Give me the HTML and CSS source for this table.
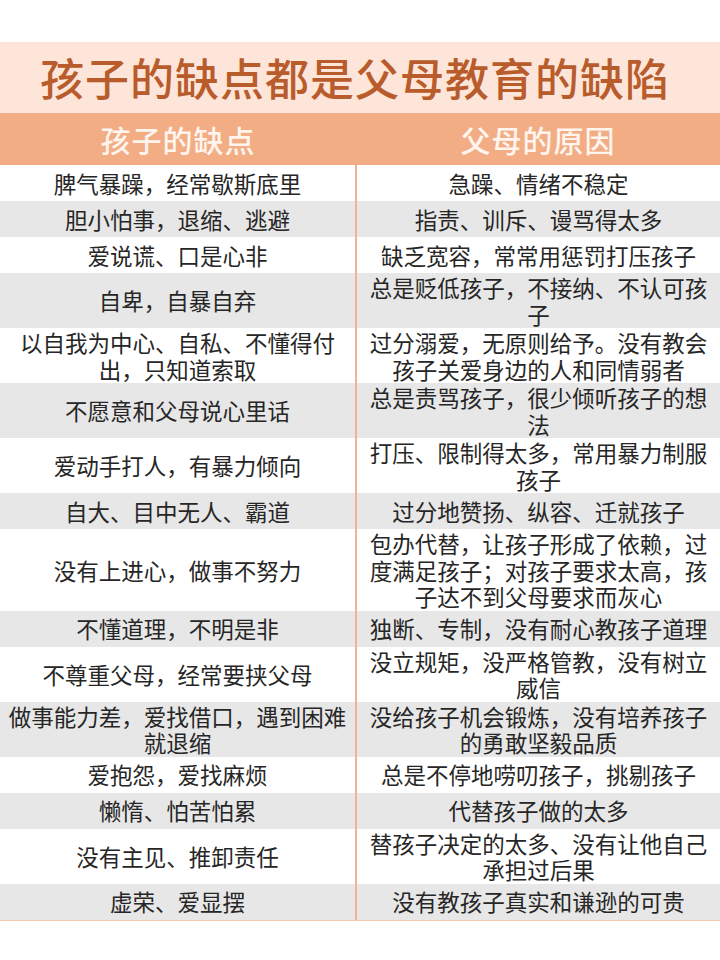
FILE: index.html
```html
<!DOCTYPE html>
<html lang="zh-CN">
<head>
<meta charset="utf-8">
<title>孩子的缺点都是父母教育的缺陷</title>
<link rel="stylesheet" href="styles.css">
</head>
<body>
<div class="page">
  <div class="title">孩子的缺点都是父母教育的缺陷</div>
  <div class="head">
    <div class="hcell">孩子的缺点</div>
    <div class="hcell">父母的原因</div>
  </div>
  <div class="table">
    <div class="row"><div class="cell"><span class="ln">脾气暴躁，经常歇斯底里</span></div><div class="cell r"><span class="ln">急躁、情绪不稳定</span></div></div>
    <div class="row g"><div class="cell"><span class="ln">胆小怕事，退缩、逃避</span></div><div class="cell r"><span class="ln">指责、训斥、谩骂得太多</span></div></div>
    <div class="row"><div class="cell"><span class="ln">爱说谎、口是心非</span></div><div class="cell r"><span class="ln">缺乏宽容，常常用惩罚打压孩子</span></div></div>
    <div class="row g"><div class="cell"><span class="ln">自卑，自暴自弃</span></div><div class="cell r"><span class="ln">总是贬低孩子，不接纳、不认可孩</span><span class="ln">子</span></div></div>
    <div class="row"><div class="cell"><span class="ln">以自我为中心、自私、不懂得付</span><span class="ln">出，只知道索取</span></div><div class="cell r"><span class="ln">过分溺爱，无原则给予。没有教会</span><span class="ln">孩子关爱身边的人和同情弱者</span></div></div>
    <div class="row g"><div class="cell"><span class="ln">不愿意和父母说心里话</span></div><div class="cell r"><span class="ln">总是责骂孩子，很少倾听孩子的想</span><span class="ln">法</span></div></div>
    <div class="row"><div class="cell"><span class="ln">爱动手打人，有暴力倾向</span></div><div class="cell r"><span class="ln">打压、限制得太多，常用暴力制服</span><span class="ln">孩子</span></div></div>
    <div class="row g"><div class="cell"><span class="ln">自大、目中无人、霸道</span></div><div class="cell r"><span class="ln">过分地赞扬、纵容、迁就孩子</span></div></div>
    <div class="row"><div class="cell"><span class="ln">没有上进心，做事不努力</span></div><div class="cell r"><span class="ln">包办代替，让孩子形成了依赖，过</span><span class="ln">度满足孩子；对孩子要求太高，孩</span><span class="ln">子达不到父母要求而灰心</span></div></div>
    <div class="row g"><div class="cell"><span class="ln">不懂道理，不明是非</span></div><div class="cell r"><span class="ln">独断、专制，没有耐心教孩子道理</span></div></div>
    <div class="row"><div class="cell"><span class="ln">不尊重父母，经常要挟父母</span></div><div class="cell r"><span class="ln">没立规矩，没严格管教，没有树立</span><span class="ln">威信</span></div></div>
    <div class="row g"><div class="cell"><span class="ln">做事能力差，爱找借口，遇到困难</span><span class="ln">就退缩</span></div><div class="cell r"><span class="ln">没给孩子机会锻炼，没有培养孩子</span><span class="ln">的勇敢坚毅品质</span></div></div>
    <div class="row"><div class="cell"><span class="ln">爱抱怨，爱找麻烦</span></div><div class="cell r"><span class="ln">总是不停地唠叨孩子，挑剔孩子</span></div></div>
    <div class="row g"><div class="cell"><span class="ln">懒惰、怕苦怕累</span></div><div class="cell r"><span class="ln">代替孩子做的太多</span></div></div>
    <div class="row"><div class="cell"><span class="ln">没有主见、推卸责任</span></div><div class="cell r"><span class="ln">替孩子决定的太多、没有让他自己</span><span class="ln">承担过后果</span></div></div>
    <div class="row g"><div class="cell"><span class="ln">虚荣、爱显摆</span></div><div class="cell r"><span class="ln">没有教孩子真实和谦逊的可贵</span></div></div>
  </div>
</div>
</body>
</html>
```

FILE: styles.css
```css
html, body {
  margin: 0;
  padding: 0;
  background: #ffffff;
}
body {
  font-family: "Noto Sans CJK SC", "Noto Sans", sans-serif;
  color: #262626;
}
.page {
  width: 720px;
  padding-top: 42px;
}
.title {
  height: 71px;
  background: #fde5d9;
  color: #b95c2c;
  font-size: 44px;
  font-weight: 500;
  letter-spacing: 1px;
  line-height: 71px;
  text-align: center;
  padding-right: 10px;
  box-sizing: border-box;
}
.head {
  display: grid;
  grid-template-columns: 356px 364px;
  height: 52px;
  background: #f2ad85;
}
.hcell {
  display: flex;
  align-items: center;
  justify-content: center;
  color: #fff5ee;
  font-size: 30px;
  font-weight: 500;
  letter-spacing: 1px;
}
.table {
  border-bottom: 1px solid #f6c9b0;
}
.row {
  display: grid;
  grid-template-columns: 355px 365px;
  min-height: 36px;
  background: #ffffff;
}
.row.g {
  background: #e7e7e7;
}
.cell {
  display: flex;
  flex-direction: column;
  align-items: center;
  justify-content: center;
  text-align: center;
  font-size: 22.5px;
  padding: 1px 0;
}
.ln {
  display: block;
  height: 26.5px;
  line-height: 26.5px;
  white-space: nowrap;
}
.cell.r {
  border-left: 2px solid #f1b493;
}
```
